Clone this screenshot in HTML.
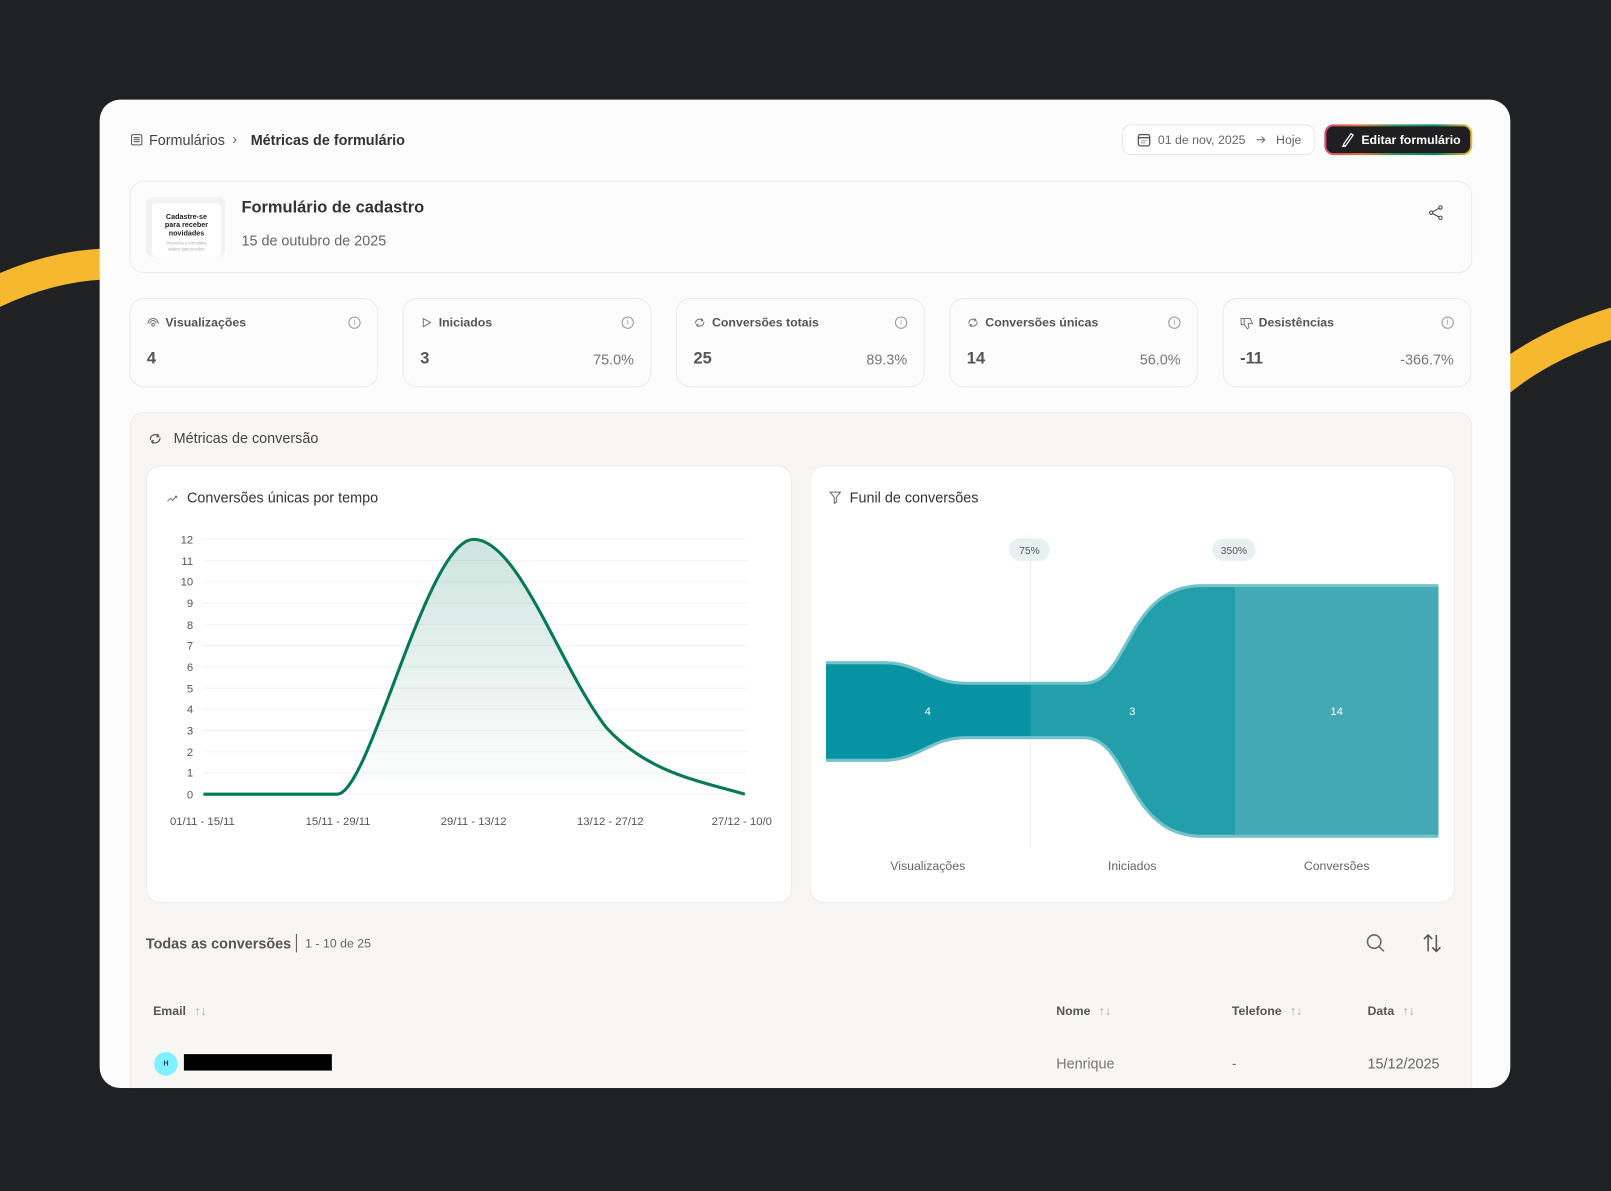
<!DOCTYPE html>
<html><head><meta charset="utf-8">
<style>
*{box-sizing:border-box;margin:0;padding:0}
html,body{width:1611px;height:1189px;overflow:hidden;background:#202123;font-family:"Liberation Sans",sans-serif;color:#333}
#s{position:absolute;left:0;top:0;width:1568px;height:1157px;transform:scale(1.02742);transform-origin:0 0}
.a{position:absolute}
.card{position:absolute;left:97px;top:97px;width:1373px;height:962px;background:#fcfcfc;border-radius:20px;overflow:hidden}
.box{position:absolute;background:#fcfcfc;border:1px solid #ebebeb;border-radius:14px}
.stat .t{position:absolute;left:34px;top:16px;font-size:12px;font-weight:bold;color:#555}
.stat svg.ic{position:absolute;left:16px;top:17px}
.stat .v{position:absolute;left:16px;top:50px;font-size:16px;font-weight:bold;color:#555}
.stat .p{position:absolute;right:16px;top:51px;font-size:14px;color:#777}
.stat .i{position:absolute;right:16px;top:17px;width:12px;height:12px;border:1px solid #999;border-radius:50%;font-size:8px;text-align:center;line-height:10px;color:#999}
.th{font-size:12px;font-weight:bold;color:#555}
.th span{color:#aaa;font-weight:normal;margin-left:8px}
</style></head><body>
<div id="s">
<svg class="a" style="left:0;top:0" width="1568" height="1157">
<path d="M-20 292 Q40 260 100 257" stroke="#f5b82e" stroke-width="30" fill="none"/>
<path d="M1455 375 Q1505 332 1585 310" stroke="#f5b82e" stroke-width="30" fill="none"/>
</svg>
<div class="card"></div>
<svg class="a" style="left:127px;top:130px" width="12" height="12" viewBox="0 0 12 12"><rect x="1" y="1" width="10" height="10" rx="1.5" fill="none" stroke="#555"/><path d="M3 4h6M3 6h6M3 8h6" stroke="#555"/></svg>
<div class="a" style="left:145px;top:128px;font-size:14px;color:#444">Formulários</div>
<div class="a" style="left:226px;top:127px;font-size:14px;color:#666">›</div>
<div class="a" style="left:244px;top:128px;font-size:14px;font-weight:bold;color:#333">Métricas de formulário</div>
<div class="a" style="left:1092px;top:121px;width:188px;height:30px;border:1px solid #e6e6e6;border-radius:9px;background:#fff"></div>
<svg class="a" style="left:1107px;top:129px" width="13" height="14" viewBox="0 0 13 14"><rect x="1" y="2" width="11" height="11" rx="2" fill="none" stroke="#555" stroke-width="1.3"/><path d="M1 5h11" stroke="#555" stroke-width="1.3"/><path d="M4 8h1M6 8h1M8 8h1M4 10h1M6 10h1" stroke="#555"/></svg>
<div class="a" style="left:1127px;top:129px;font-size:12px;color:#666">01 de nov, 2025</div>
<svg class="a" style="left:1222px;top:131px" width="10" height="10" viewBox="0 0 10 10"><path d="M1 5h8M6 2l3 3-3 3" stroke="#666" fill="none"/></svg>
<div class="a" style="left:1242px;top:129px;font-size:12px;color:#666">Hoje</div>
<div class="a" style="left:1289px;top:121px;width:144px;height:30px;border-radius:9px;background:linear-gradient(90deg,#e0487a,#e07a3a,#2a9a6a,#0a8a6a,#f5b82e);padding:2px"><div style="width:100%;height:100%;background:#1f1f21;border-radius:7px;color:#fff;font-size:12px;font-weight:bold;line-height:26px;padding-left:34px">Editar formulário</div></div>
<svg class="a" style="left:1305px;top:128px" width="14" height="15" viewBox="0 0 14 15"><path d="M3 12 L10 2 L12 3.5 L5 13.5 L2.5 14 Z M1 14.5h4" stroke="#fff" stroke-width="1.2" fill="none"/></svg>
<div class="box" style="left:126px;top:176px;width:1307px;height:90px"></div>
<div class="a" style="left:142px;top:192px;width:77px;height:58px;background:#f2f2f2;border-radius:6px"></div>
<div class="a" style="left:148px;top:198px;width:67px;height:52px;background:#fff;border-radius:4px;text-align:center;font-size:7px;font-weight:bold;line-height:8px;padding-top:10px;color:#222">Cadastre-se<br>para receber<br>novidades<div style="font-size:4px;color:#aaa;font-weight:normal;line-height:6px;margin-top:2px">Preencha o formulário<br>abaixo para receber</div></div>
<div class="a" style="left:235px;top:194px;font-size:16px;font-weight:bold;color:#333">Formulário de cadastro</div>
<div class="a" style="left:235px;top:226px;font-size:14px;color:#666">15 de outubro de 2025</div>
<svg class="a" style="left:1390px;top:199px" width="16" height="16" viewBox="0 0 16 16"><circle cx="12" cy="3" r="1.6" fill="none" stroke="#444"/><circle cx="3" cy="8" r="1.6" fill="none" stroke="#444"/><circle cx="12" cy="13" r="1.6" fill="none" stroke="#444"/><path d="M4.4 7.2 10.6 3.8M4.4 8.8 10.6 12.2" stroke="#444"/></svg>
<div class="box stat" style="left:126px;top:290px;width:242px;height:87px"><svg class="ic" width="12" height="12" viewBox="0 0 12 12"><path d="M1 7a5 5 0 0 1 10 0M3 7a3 3 0 0 1 6 0" fill="none" stroke="#777"/><circle cx="6" cy="8" r="1.3" fill="none" stroke="#777"/></svg><div class="t">Visualizações</div><div class="i">i</div><div class="v">4</div></div>
<div class="box stat" style="left:392px;top:290px;width:242px;height:87px"><svg class="ic" width="12" height="12" viewBox="0 0 12 12"><path d="M3 2l7 4-7 4Z" fill="none" stroke="#777"/></svg><div class="t">Iniciados</div><div class="i">i</div><div class="v">3</div><div class="p">75.0%</div></div>
<div class="box stat" style="left:658px;top:290px;width:242px;height:87px"><svg class="ic" width="12" height="12" viewBox="0 0 12 12"><path d="M2 7a4 4 0 0 1 7-3M10 5a4 4 0 0 1-7 3M8 2l1 2-2 .5M4 10l-1-2 2-.5" fill="none" stroke="#777"/></svg><div class="t">Conversões totais</div><div class="i">i</div><div class="v">25</div><div class="p">89.3%</div></div>
<div class="box stat" style="left:924px;top:290px;width:242px;height:87px"><svg class="ic" width="12" height="12" viewBox="0 0 12 12"><path d="M2 7a4 4 0 0 1 7-3M10 5a4 4 0 0 1-7 3M8 2l1 2-2 .5M4 10l-1-2 2-.5" fill="none" stroke="#777"/></svg><div class="t">Conversões únicas</div><div class="i">i</div><div class="v">14</div><div class="p">56.0%</div></div>
<div class="box stat" style="left:1190px;top:290px;width:242px;height:87px"><svg class="ic" width="13" height="13" viewBox="0 0 13 13"><path d="M1 2h3v6H1ZM4 2h6l2 5H8l.5 4-1.5 1L4 8" fill="none" stroke="#777"/></svg><div class="t">Desistências</div><div class="i">i</div><div class="v">-11</div><div class="p">-366.7%</div></div>
<div class="a" style="left:126px;top:401px;width:1307px;height:700px;background:#f7f6f4;border:1px solid #ececec;border-radius:14px"></div>
<svg class="a" style="left:144px;top:420px" width="14" height="14" viewBox="0 0 12 12"><path d="M2 7a4 4 0 0 1 7-3M10 5a4 4 0 0 1-7 3M8 2l1 2-2 .5M4 10l-1-2 2-.5" fill="none" stroke="#555"/></svg>
<div class="a" style="left:169px;top:418px;font-size:14px;color:#444">Métricas de conversão</div>
<div class="box" style="left:142px;top:453px;width:629px;height:426px;background:#fff"></div>
<div class="box" style="left:788px;top:453px;width:628px;height:426px;background:#fff"></div>
<svg class="a" style="left:162px;top:480px" width="12" height="10" viewBox="0 0 12 10"><path d="M1 8l3-3 2 2 4-4M8 3h2v2" fill="none" stroke="#777"/></svg>
<div class="a" style="left:182px;top:476px;font-size:14px;color:#333">Conversões únicas por tempo</div>
<svg class="a" style="left:807px;top:478px" width="12" height="13" viewBox="0 0 12 13"><path d="M1 1h10L7 6v5l-2 1V6Z" fill="none" stroke="#666"/></svg>
<div class="a" style="left:827px;top:476px;font-size:14px;color:#333">Funil de conversões</div>
<svg class="a" style="left:0;top:0" width="1568" height="1157" font-family="Liberation Sans" font-size="11" fill="#555">
<defs>
<linearGradient id="g" x1="0" y1="0" x2="0" y2="1"><stop offset="0" stop-color="#0a7a5a" stop-opacity="0.2"/><stop offset="1" stop-color="#0a7a5a" stop-opacity="0"/></linearGradient>
<clipPath id="c1"><rect x="804" y="500" width="199" height="400"/></clipPath>
<clipPath id="c2"><rect x="1003" y="500" width="199" height="400"/></clipPath>
<clipPath id="c3"><rect x="1202" y="500" width="198" height="400"/></clipPath>
</defs>
<g stroke="#f2f2f2">
<path d="M198 525H727M198 545.7H727M198 566.3H727M198 587H727M198 607.7H727M198 628.3H727M198 649H727M198 669.7H727M198 690.3H727M198 711H727M198 731.7H727M198 752.3H727M198 773H727"/>
</g>
<g text-anchor="end">
<text x="188" y="529">12</text><text x="188" y="550">11</text><text x="188" y="570">10</text><text x="188" y="591">9</text><text x="188" y="612">8</text><text x="188" y="632">7</text><text x="188" y="653">6</text><text x="188" y="674">5</text><text x="188" y="694">4</text><text x="188" y="715">3</text><text x="188" y="736">2</text><text x="188" y="756">1</text><text x="188" y="777">0</text>
</g>
<g text-anchor="middle">
<text x="197" y="803">01/11 - 15/11</text><text x="329" y="803">15/11 - 29/11</text><text x="461" y="803">29/11 - 13/12</text><text x="594" y="803">13/12 - 27/12</text><text x="722" y="803">27/12 - 10/0</text>
</g>
<path d="M198 773 L328 773 C360 773,415 525,461 525 C505 525,545 650,590 708 C630 752,680 760,725 773 Z" fill="url(#g)"/>
<path d="M198 773 L328 773 C360 773,415 525,461 525 C505 525,545 650,590 708 C630 752,680 760,725 773" fill="none" stroke="#047857" stroke-width="3"/>
<path d="M1003 520V825" stroke="#f0f0f0"/>
<path id="fun" d="M804 645 L860 645 C895 645,905 665,940 665 L1055 665 C1100 665,1095 570,1170 570 L1400 570 L1400 814 L1170 814 C1095 814,1100 718,1055 718 L940 718 C905 718,895 740,860 740 L804 740 Z"/>
<use href="#fun" clip-path="url(#c1)" fill="#0893a3"/>
<use href="#fun" clip-path="url(#c2)" fill="#239fab"/>
<use href="#fun" clip-path="url(#c3)" fill="#43aab5"/>
<path d="M804 645 L860 645 C895 645,905 665,940 665 L1055 665 C1100 665,1095 570,1170 570 L1400 570 M1400 814 L1170 814 C1095 814,1100 718,1055 718 L940 718 C905 718,895 740,860 740 L804 740" fill="none" stroke="#74c2ca" stroke-width="3"/>
<rect x="982" y="524" width="40" height="22" rx="11" fill="#e8f1f2"/>
<rect x="1180" y="524" width="42" height="22" rx="11" fill="#e8f1f2"/>
<g text-anchor="middle" font-size="10"><text x="1002" y="539">75%</text><text x="1201" y="539">350%</text></g>
<g text-anchor="middle" fill="#fff" font-size="11"><text x="903" y="696">4</text><text x="1102" y="696">3</text><text x="1301" y="696">14</text></g>
<g text-anchor="middle" font-size="12" fill="#666"><text x="903" y="847">Visualizações</text><text x="1102" y="847">Iniciados</text><text x="1301" y="847">Conversões</text></g>
</svg>
<div class="a" style="left:142px;top:910px;font-size:14px;font-weight:bold;color:#555">Todas as conversões</div>
<div class="a" style="left:288px;top:909px;width:1px;height:18px;background:#555"></div>
<div class="a" style="left:297px;top:911px;font-size:12px;color:#666">1 - 10 de 25</div>
<svg class="a" style="left:1329px;top:908px" width="20" height="20" viewBox="0 0 20 20"><circle cx="8.5" cy="8.5" r="6.5" fill="none" stroke="#666" stroke-width="1.5"/><path d="M13.5 13.5 18 18" stroke="#666" stroke-width="1.5"/></svg>
<svg class="a" style="left:1384px;top:908px" width="20" height="20" viewBox="0 0 20 20"><path d="M6 18V2M2 6 6 2 10 6M14 2V18M10 14 14 18 18 14" fill="none" stroke="#555" stroke-width="1.5"/></svg>
<div class="a th" style="left:149px;top:977px">Email<span>↑↓</span></div>
<div class="a th" style="left:1028px;top:977px">Nome<span>↑↓</span></div>
<div class="a th" style="left:1199px;top:977px">Telefone<span>↑↓</span></div>
<div class="a th" style="left:1331px;top:977px">Data<span>↑↓</span></div>
<div class="a" style="left:150px;top:1024px;width:23px;height:23px;border-radius:50%;background:#7ff0ff;font-size:7px;text-align:center;line-height:23px;color:#333;font-weight:bold">H</div>
<div class="a" style="left:179px;top:1026px;width:144px;height:16px;background:#000"></div>
<div class="a" style="left:1028px;top:1027px;font-size:14px;color:#777">Henrique</div>
<div class="a" style="left:1199px;top:1027px;font-size:14px;color:#777">-</div>
<div class="a" style="left:1331px;top:1027px;font-size:14px;color:#666">15/12/2025</div>
<div class="a" style="left:0;top:1059px;width:1568px;height:100px;background:#202123"></div>
<svg class="a" style="left:0;top:1030px" width="1568" height="40"><path d="M97 1v9a20 20 0 0 0 20 20H97Z M1470 1v9a20 20 0 0 1 -20 20H1470Z" fill="#202123"/></svg>
</div>
</body></html>
